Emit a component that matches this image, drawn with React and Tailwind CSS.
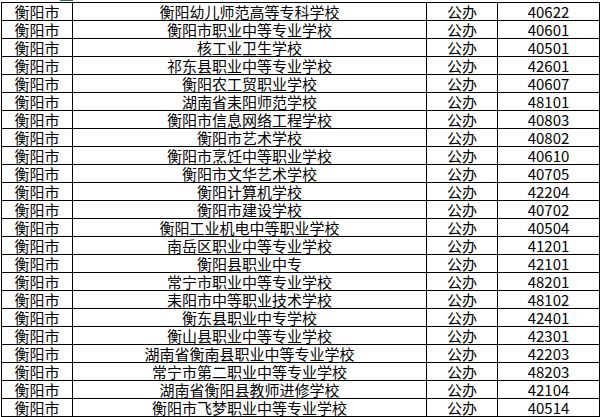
const rows = [
  ["衡阳幼儿师范高等专科学校", "40622"],
  ["衡阳市职业中等专业学校", "40601"],
  ["核工业卫生学校", "40501"],
  ["祁东县职业中等专业学校", "42601"],
  ["衡阳农工贸职业学校", "40607"],
  ["湖南省耒阳师范学校", "48101"],
  ["衡阳市信息网络工程学校", "40803"],
  ["衡阳市艺术学校", "40802"],
  ["衡阳市烹饪中等职业学校", "40610"],
  ["衡阳市文华艺术学校", "40705"],
  ["衡阳计算机学校", "42204"],
  ["衡阳市建设学校", "40702"],
  ["衡阳工业机电中等职业学校", "40504"],
  ["南岳区职业中等专业学校", "41201"],
  ["衡阳县职业中专", "42101"],
  ["常宁市职业中等专业学校", "48201"],
  ["耒阳市中等职业技术学校", "48102"],
  ["衡东县职业中专学校", "42401"],
  ["衡山县职业中等专业学校", "42301"],
  ["湖南省衡南县职业中等专业学校", "42203"],
  ["常宁市第二职业中等专业学校", "48203"],
  ["湖南省衡阳县教师进修学校", "42104"],
  ["衡阳市飞梦职业中等专业学校", "40514"],
];

export default function App() {
  return (
    <div
      className="relative w-[600px] h-[417px] overflow-hidden bg-white pt-[2px] text-black"
      style={{ fontFamily: '"Noto Sans CJK SC", "Liberation Sans", sans-serif' }}
    >
      <span className="absolute left-[60px] top-0 w-[13px] h-[1px] bg-[#217346]" />
      <div className="ml-[1px] w-[599px] border-t border-l border-black">
        {rows.map(([name, code], i) => (
          <div key={i} className="flex h-[18px] border-b border-black text-[15px] leading-[16px]">
            <div className="w-[71px] border-r border-black text-center pt-px">衡阳市</div>
            <div className="w-[354px] border-r border-black text-center pt-px whitespace-nowrap">{name}</div>
            <div className="w-[71px] border-r border-black text-center pt-px">公办</div>
            <div className="w-[102px] border-r border-black text-center pt-px">{code}</div>
          </div>
        ))}
      </div>
    </div>
  );
}
